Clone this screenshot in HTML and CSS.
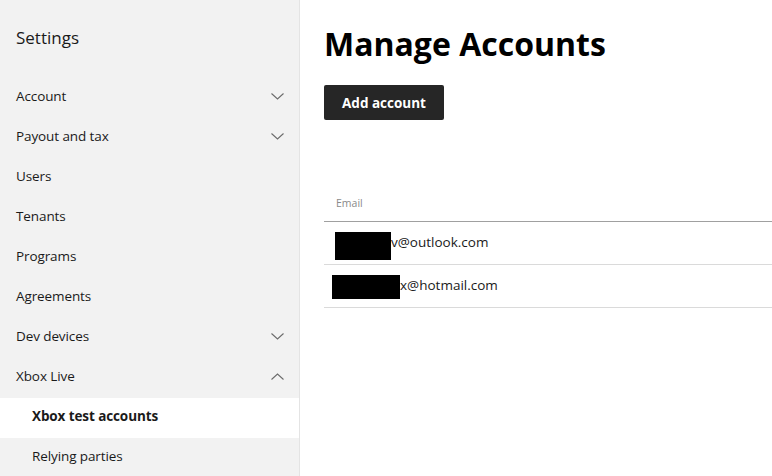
FILE: index.html
```
<!DOCTYPE html>
<html lang="en">
<head>
<meta charset="utf-8">
<title>Manage Accounts</title>
<link rel="stylesheet" href="styles.css">
</head>
<body>
<div class="app">
  <nav class="sidebar">
    <div class="sidebar-title">Settings</div>
    <ul class="nav">
      <li class="nav-item"><span>Account</span><svg class="chev" viewBox="0 0 13 7"><path d="M0.5 0.5 L6.5 6 L12.5 0.5"/></svg></li>
      <li class="nav-item"><span>Payout and tax</span><svg class="chev" viewBox="0 0 13 7"><path d="M0.5 0.5 L6.5 6 L12.5 0.5"/></svg></li>
      <li class="nav-item"><span>Users</span></li>
      <li class="nav-item"><span>Tenants</span></li>
      <li class="nav-item"><span>Programs</span></li>
      <li class="nav-item"><span>Agreements</span></li>
      <li class="nav-item"><span>Dev devices</span><svg class="chev" viewBox="0 0 13 7"><path d="M0.5 0.5 L6.5 6 L12.5 0.5"/></svg></li>
      <li class="nav-item"><span>Xbox Live</span><svg class="chev" viewBox="0 0 13 7"><path d="M0.5 6.5 L6.5 1 L12.5 6.5"/></svg></li>
      <li class="nav-item sub active"><span>Xbox test accounts</span></li>
      <li class="nav-item sub"><span>Relying parties</span></li>
    </ul>
  </nav>
  <main class="content">
    <h1 class="title">Manage Accounts</h1>
    <button class="btn">Add account</button>
    <table class="grid">
      <thead>
        <tr><th>Email</th></tr>
      </thead>
      <tbody>
        <tr><td><span class="redact r1"></span>v@outlook.com</td></tr>
        <tr><td><span class="redact r2"></span>x@hotmail.com</td></tr>
      </tbody>
    </table>
  </main>
</div>
</body>
</html>
```
FILE: styles.css
```
html, body {
  margin: 0;
  padding: 0;
  height: 100%;
  background: #ffffff;
  font-family: "Open Sans", "Noto Sans", sans-serif;
  color: #1a1a1a;
  overflow: hidden;
}

.app {
  display: flex;
  height: 476px;
}

.sidebar {
  width: 299px;
  flex: 0 0 299px;
  background: #f2f2f2;
  border-right: 1px solid #e4e4e4;
}

.sidebar-title {
  font-size: 17px;
  font-weight: 400;
  padding: 26px 16px 0 16px;
  height: 78px;
  box-sizing: border-box;
  color: #1a1a1a;
}

.nav {
  list-style: none;
  margin: 0;
  padding: 0;
}

.nav-item {
  height: 40px;
  display: flex;
  align-items: center;
  justify-content: space-between;
  padding: 0 15px 0 16px;
  font-size: 13.5px;
  letter-spacing: -0.1px;
}

.nav-item span {
  position: relative;
  top: -2px;
}

.nav-item.sub {
  padding-left: 32px;
}

.nav-item.active {
  background: #ffffff;
  font-weight: 700;
}

.chev {
  width: 13px;
  height: 7px;
  fill: none;
  stroke: #6b6b6b;
  stroke-width: 1.1;
  position: relative;
  top: -2px;
}

.content {
  flex: 1;
  padding: 0 0 0 24px;
}

.title {
  margin: 24px 0 0 0;
  font-size: 32px;
  font-weight: 700;
  line-height: 40px;
  color: #000000;
}

.btn {
  margin-top: 21px;
  width: 120px;
  height: 35px;
  background: #262626;
  color: #ffffff;
  border: none;
  border-radius: 2px;
  font-family: "Open Sans", "Noto Sans", sans-serif;
  font-weight: 700;
  font-size: 13.5px;
  padding: 0;
  display: block;
}

.grid {
  margin-top: 64px;
  width: 100%;
  border-collapse: collapse;
}

.grid th {
  text-align: left;
  font-weight: 400;
  font-size: 10.5px;
  color: #8a8a8a;
  padding: 0 12px;
  height: 37px;
  border-bottom: 1px solid #a0a0a0;
}

.grid td {
  height: 42px;
  padding: 0 12px;
  font-size: 13.5px;
  color: #1a1a1a;
  border-bottom: 1px solid #dadada;
}

.redact {
  display: inline-block;
  background: #000000;
  vertical-align: middle;
}

.r1 {
  width: 56px;
  height: 28px;
  margin-left: -1px;
  position: relative;
  top: 3px;
}

.r2 {
  width: 68px;
  height: 24px;
  margin-left: -4px;
  position: relative;
  top: 1px;
}
```
